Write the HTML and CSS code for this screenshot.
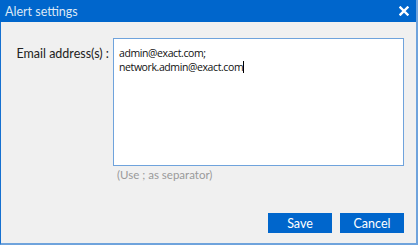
FILE: index.html
```html
<!DOCTYPE html>
<html>
  <head>
    <title>Alert settings</title>
    <meta charset='utf-8'>
    <link rel="stylesheet" href="styles.css">
  </head>
  <body>
    <div class="dialog">
      <div class="titlebar">
        <span class="title">Alert settings</span>
        <svg class="close" width="10" height="10" viewBox="0 0 10 10">
          <path d="M1.5 1.5 L8.5 8.5 M8.5 1.5 L1.5 8.5" stroke="#ffffff" stroke-width="2.4" stroke-linecap="square"/>
        </svg>
      </div>
      <div class="content">
        <div class="row">
          <label class="label" for="emails">Email address(s) :</label>
          <div class="field">
            <div class="textarea" id="emails">admin@exact.com;<br>network.admin@exact.com<span class="caret"></span></div>
            <div class="hint">(Use ; as separator)</div>
          </div>
        </div>
        <div class="buttons">
          <button class="btn">Save</button>
          <button class="btn">Cancel</button>
        </div>
      </div>
    </div>
  </body>
</html>
```
FILE: styles.css
```css
body {
  margin: 0;
  background: #ffffff;
  font-family: "Lato", "Open Sans", sans-serif;
}
.dialog {
  width: 415px;
  height: 243px;
  border-left: 1px solid #1570d0;
  border-right: 2px solid #6fa3dc;
  border-bottom: 2px solid #6fa3dc;
  background: #f0f0f0;
  display: flex;
  flex-direction: column;
}
.titlebar {
  height: 22px;
  background: #0066cc;
  display: flex;
  align-items: center;
  justify-content: space-between;
  padding: 0 6px 0 5px;
  margin-left: -1px;
}
.title {
  color: #dce8f6;
  font-size: 12.5px;
}
.close {
  margin-right: 1px;
}
.content {
  flex: 1;
  display: flex;
  flex-direction: column;
  justify-content: space-between;
  padding: 16px 12px 10px 0;
}
.row {
  display: flex;
}
.label {
  width: 112px;
  text-align: right;
  font-size: 12.5px;
  color: #222222;
  padding-top: 8px;
  padding-right: 4px;
  box-sizing: border-box;
}
.field {
  flex: 1;
}
.textarea {
  height: 114px;
  background: #ffffff;
  border: 1px solid #6fa3dc;
  padding: 7px 5px 5px;
  font-family: "Open Sans", "Noto Sans", sans-serif;
  font-size: 10.5px;
  letter-spacing: -0.4px;
  line-height: 14px;
  color: #111111;
}
.caret {
  display: inline-block;
  width: 1px;
  height: 12px;
  background: #000000;
  vertical-align: -2px;
}
.hint {
  font-size: 11.5px;
  color: #9a9a9a;
  padding: 2px 0 0 4px;
}
.buttons {
  display: flex;
  justify-content: flex-end;
  gap: 8px;
}
.btn {
  width: 64px;
  height: 20px;
  background: #0066cc;
  border: none;
  color: #ffffff;
  font-family: "Lato", "Open Sans", sans-serif;
  font-size: 12.5px;
  padding: 0;
}
```
